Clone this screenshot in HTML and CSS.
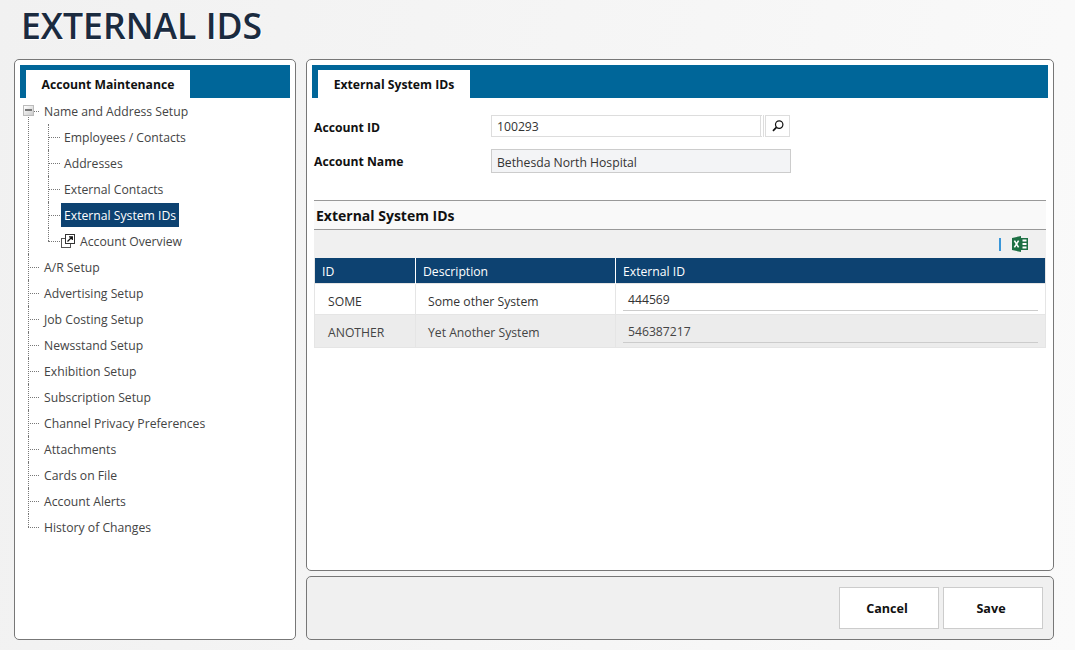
FILE: index.html
```html
<!DOCTYPE html>
<html lang="en">
<head>
    <meta charset="UTF-8">
    <title>External IDs</title>
    <link rel="stylesheet" href="styles.css">
</head>

<body>
<h1 class="page-title">EXTERNAL IDS</h1>
<div class="layout">
    <!--left tree-->
    <div class="panel side">
        <div class="tab-bar"><span class="tab side-tab">Account Maintenance</span></div>
        <ul class="tree">
            <li class="node first">
                <span class="toggle"></span>
                <span class="label">Name and Address Setup</span>
                <ul class="sub">
                    <li class="node"><span class="label">Employees / Contacts</span></li>
                    <li class="node"><span class="label">Addresses</span></li>
                    <li class="node"><span class="label">External Contacts</span></li>
                    <li class="node"><span class="label selected">External System IDs</span></li>
                    <li class="node">
                        <svg class="open-icon" width="14" height="14" viewBox="0 0 14 14">
                            <rect x="0.5" y="4.5" width="9" height="9" fill="#fff" stroke="#555"/>
                            <rect x="4.5" y="0.5" width="9" height="9" fill="#fff" stroke="#333"/>
                            <path d="M6.5 7.5L11 3M8 2.8h3.3v3.3" fill="none" stroke="#111" stroke-width="1.3"/>
                        </svg>
                        <span class="label icon-label">Account Overview</span>
                    </li>
                </ul>
            </li>
            <li class="node"><span class="label">A/R Setup</span></li>
            <li class="node"><span class="label">Advertising Setup</span></li>
            <li class="node"><span class="label">Job Costing Setup</span></li>
            <li class="node"><span class="label">Newsstand Setup</span></li>
            <li class="node"><span class="label">Exhibition Setup</span></li>
            <li class="node"><span class="label">Subscription Setup</span></li>
            <li class="node"><span class="label">Channel Privacy Preferences</span></li>
            <li class="node"><span class="label">Attachments</span></li>
            <li class="node"><span class="label">Cards on File</span></li>
            <li class="node"><span class="label">Account Alerts</span></li>
            <li class="node last"><span class="label">History of Changes</span></li>
        </ul>
    </div>

    <div class="main">
        <div class="panel content">
            <div class="tab-bar"><span class="tab main-tab">External System IDs</span></div>

            <div class="form">
                <div class="form-row row-id">
                    <label class="form-label">Account ID</label>
                    <div class="input id-input">100293</div>
                    <button class="search-btn">
                        <svg width="14" height="14" viewBox="0 0 14 14">
                            <circle cx="8.2" cy="5.6" r="3.7" fill="none" stroke="#111" stroke-width="1.2"/>
                            <path d="M5.4 8.4L2 11.8" stroke="#111" stroke-width="1.7"/>
                        </svg>
                    </button>
                </div>
                <div class="form-row row-name">
                    <label class="form-label">Account Name</label>
                    <div class="input name-input">Bethesda North Hospital</div>
                </div>
            </div>

            <div class="section">
                <h2 class="section-title">External System IDs</h2>
                <div class="toolbar">
                    <span class="tool-sep"></span>
                    <svg class="excel" width="16" height="16" viewBox="0 0 16 16">
                        <path d="M0 2L9 0V16L0 14Z" fill="#1d7044"/>
                        <path d="M9 2H16V14H9Z" fill="#1d7044"/>
                        <path d="M10.5 3.5H14.5V5.5H10.5ZM10.5 7H14.5V9H10.5ZM10.5 10.5H14.5V12.5H10.5Z" fill="#fff"/>
                        <path d="M2.4 4.6L6.6 11.4M6.6 4.6L2.4 11.4" stroke="#fff" stroke-width="1.6"/>
                    </svg>
                </div>
                <table class="grid">
                    <thead>
                        <tr>
                            <th class="col-id">ID</th>
                            <th class="col-desc">Description</th>
                            <th>External ID</th>
                        </tr>
                    </thead>
                    <tbody>
                        <tr>
                            <td class="cell">SOME</td>
                            <td class="cell">Some other System</td>
                            <td><div class="cell-input">444569</div></td>
                        </tr>
                        <tr class="alt">
                            <td class="cell">ANOTHER</td>
                            <td class="cell">Yet Another System</td>
                            <td><div class="cell-input">546387217</div></td>
                        </tr>
                    </tbody>
                </table>
            </div>
        </div>

        <div class="panel actions">
            <button class="action-btn">Cancel</button>
            <button class="action-btn">Save</button>
        </div>
    </div>
</div>
</body>
</html>
```

FILE: styles.css
```css
html,
body,
ul,
li,
h1,
h2 {
    margin: 0;
    padding: 0;
    list-style: none;
}
body {
    width: 1075px;
    height: 650px;
    overflow: hidden;
    font-family: "Open Sans", "Noto Sans", sans-serif;
    font-size: 12.2px;
    color: #333;
    background: linear-gradient(100deg, #f1f1f1 0%, #f6f6f6 60%, #fafafa 100%);
}
.page-title {
    height: 59px;
    padding-left: 21px;
    box-sizing: border-box;
    font-size: 35.6px;
    line-height: 51px;
    font-weight: 600;
    color: #1b2b3f;
    text-shadow: 1px 1px 0 #fff;
}
.layout {
    display: flex;
    gap: 10px;
    padding-left: 14px;
}
.panel {
    box-sizing: border-box;
    border: 1px solid #777;
    border-radius: 5px;
    background: #fff;
}
.side {
    width: 282px;
    height: 581px;
    padding: 5px;
}
.main {
    display: flex;
    flex-direction: column;
    gap: 5px;
    width: 748px;
}
.content {
    height: 512px;
    padding: 5px;
}
.tab-bar {
    height: 33px;
    padding: 5px 0 0 6px;
    box-sizing: border-box;
    background: #006699;
}
.tab {
    display: block;
    height: 28px;
    box-sizing: border-box;
    background: #fff;
    font-weight: 700;
    line-height: 30px;
    text-align: center;
    color: #111;
}
.side-tab {
    width: 164px;
}
.main-tab {
    width: 152px;
}

/* tree */
.tree {
    position: relative;
    padding-left: 8px;
}
.node {
    position: relative;
    line-height: 26px;
    min-height: 26px;
    padding-left: 16px;
}
.node::before {
    content: "";
    position: absolute;
    left: 0;
    top: 13px;
    width: 11px;
    border-top: 1px dotted #777;
}
.node::after {
    content: "";
    position: absolute;
    left: 0;
    top: 0;
    height: 100%;
    border-left: 1px dotted #777;
}
.node.first::after {
    top: 13px;
    height: calc(100% - 13px);
}
.node.last::after {
    height: 13px;
}
.sub {
    position: relative;
    margin-left: 4px;
}
.sub .node::before {
    width: 12px;
}
.sub .node:last-child::after {
    height: 13px;
}
.label {
    display: inline-block;
    height: 24px;
    line-height: 26px;
    vertical-align: top;
    margin-top: 1px;
    color: #444;
}
.selected {
    margin-left: -3px;
    padding: 0 3px;
    background: #0d4271;
    color: #fff;
}
.toggle {
    position: absolute;
    z-index: 1;
    left: -5px;
    top: 7px;
    width: 11px;
    height: 11px;
    box-sizing: border-box;
    border: 1px solid #bbb;
    background: linear-gradient(135deg, #fff, #ccc);
}
.toggle::after {
    content: "";
    position: absolute;
    left: 1px;
    top: 3px;
    width: 7px;
    height: 2px;
    background: #777;
}
.open-icon {
    position: absolute;
    left: 13px;
    top: 6px;
}
.icon-label {
    margin-left: 16px;
}

/* form */
.form {
    height: 102px;
    padding: 17px 0 0 2px;
    box-sizing: border-box;
}
.form-row {
    display: flex;
    align-items: center;
}
.row-id {
    height: 22px;
    margin-bottom: 12px;
}
.row-name {
    height: 24px;
}
.form-label {
    width: 177px;
    font-weight: 700;
    color: #111;
}
.row-id .form-label {
    padding-top: 2px;
}
.input {
    box-sizing: border-box;
    height: 100%;
    padding-left: 5px;
    border: 1px solid #ddd;
    line-height: 22px;
    color: #333;
}
.id-input {
    width: 273px;
    border-right-width: 4px;
    border-right-style: double;
}
.name-input {
    width: 300px;
    border-color: #ccc;
    background: #f3f4f6;
    line-height: 26px;
}
.search-btn {
    display: flex;
    align-items: center;
    justify-content: center;
    width: 25px;
    height: 22px;
    margin-left: 1px;
    padding: 0;
    border: 1px solid #ddd;
    background: #fff;
}

/* section and grid */
.section {
    margin: 0 2px;
    border-top: 1px solid #999;
}
.section-title {
    height: 29px;
    padding-left: 2px;
    box-sizing: border-box;
    border-bottom: 1px solid #999;
    background: #f9f9f9;
    font-size: 14px;
    font-weight: 700;
    line-height: 29px;
    color: #111;
}
.toolbar {
    display: flex;
    align-items: center;
    justify-content: flex-end;
    height: 28px;
    box-sizing: border-box;
    padding-right: 18px;
    background: #f0f0f0;
}
.tool-sep {
    width: 2px;
    height: 13px;
    margin-right: 11px;
    background: #3a96d8;
}
.grid {
    width: 732px;
    border-collapse: collapse;
    table-layout: fixed;
    border: 1px solid #e5e5e5;
    border-top: 0;
}
.grid th {
    box-sizing: border-box;
    height: 25px;
    padding: 2px 0 0 7px;
    border-left: 1px solid #fff;
    background: #0d4271;
    font-weight: 400;
    text-align: left;
    color: #fff;
}
.grid th:first-child {
    border-left: 0;
}
.col-id {
    width: 101px;
}
.col-desc {
    width: 200px;
}
.grid td {
    box-sizing: border-box;
    height: 30px;
    padding: 0;
    border-left: 1px solid #e5e5e5;
    border-top: 1px solid #e5e5e5;
    vertical-align: top;
    color: #333;
}
.grid td:first-child {
    border-left: 0;
}
.alt td {
    background: #ececec;
    height: 33px;
    color: #444;
}
.grid .cell {
    padding: 5px 0 0 12px;
    line-height: 25px;
}
.grid .cell:first-child {
    padding-left: 13px;
}
.cell-input {
    height: 23px;
    margin: 3px 7px 0;
    padding-left: 5px;
    border-bottom: 1px solid #ccc;
    line-height: 26px;
}
.alt .cell-input {
    margin-top: 4px;
    line-height: 25px;
}

/* bottom buttons */
.actions {
    display: flex;
    align-items: center;
    justify-content: flex-end;
    gap: 4px;
    height: 64px;
    padding-right: 10px;
    background: #f0f0f0;
}
.action-btn {
    width: 100px;
    height: 42px;
    padding: 0 4px 0 0;
    border: 1px solid #ccc;
    background: #fff;
    font-family: inherit;
    font-size: 12.6px;
    font-weight: 700;
    color: #111;
}
```
